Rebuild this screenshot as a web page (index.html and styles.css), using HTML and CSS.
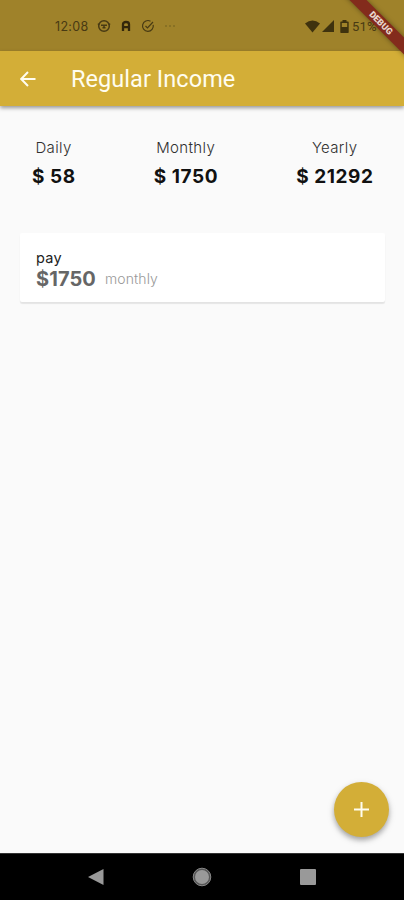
FILE: index.html
```html
<!DOCTYPE html>
<html lang="en">
<head>
<meta charset="utf-8">
<title>Regular Income</title>
<link rel="stylesheet" href="styles.css">
</head>
<body>
<div class="screen">
  <div class="status">
    <span class="clock">12:08</span>
    <svg class="face" width="14" height="14" viewBox="0 0 14 14"><circle cx="7" cy="7" r="5.300"/><path d="M.8 5.200H2.500M11.500 5.200h1.700M4 6.300h6M5.500 8.800h3M7 6.500v2"/></svg>
    <svg class="arch" width="10" height="12" viewBox="0 0 10 12"><path d="M2 11V4.300Q2 2 5 2T8 4.300V11M2 7.200H8"/></svg>
    <svg class="check" width="14" height="14" viewBox="0 0 14 14"><path d="M12.200 5.800A5.400 5.400 0 1 1 9.500 2.200M4.500 7l2 2L12 3"/></svg>
    <svg class="dots" width="12" height="4" viewBox="0 0 12 4"><path d="M1 2h2M5 2h2M9 2h2"/></svg>
    <div class="system">
      <svg width="15" height="13" viewBox="0 0 15 13"><path d="M0 3.500Q7.500-2.500 15 3.500L7.500 12.500Z"/></svg>
      <svg width="12" height="12" viewBox="0 0 12 12"><path d="M12 0V12H0Z"/></svg>
      <svg class="battery" width="9" height="13" viewBox="0 0 9 13"><path fill-rule="evenodd" d="M2.500 0h4v1.500H8q.7 0 .7.700v10q0 .8-.7.800H1q-.7 0-.7-.8v-10q0-.7.700-.7h1.500ZM1.800 3V7H7.200V3Z"/></svg>
      <span class="percent">51%</span>
    </div>
  </div>
  <header class="appbar">
    <svg class="back" width="16" height="16" viewBox="0 0 16 16"><path d="M15.500 8H1.500M8 1L1.200 8L8 15"/></svg>
    <h1>Regular Income</h1>
  </header>
  <main>
    <section class="totals">
      <div class="total daily"><span class="label">Daily</span><strong>$ 58</strong></div>
      <div class="total monthly"><span class="label">Monthly</span><strong>$ 1750</strong></div>
      <div class="total yearly"><span class="label">Yearly</span><strong>$ 21292</strong></div>
    </section>
    <article class="card">
      <div class="name">pay</div>
      <div class="line"><strong>$1750</strong><span>monthly</span></div>
    </article>
  </main>
  <nav class="navbar">
    <svg width="16" height="18" viewBox="0 0 16 18"><path d="M0 9L15.500 1V17Z"/></svg>
    <svg width="20" height="20" viewBox="0 0 20 20"><circle class="ring" cx="10" cy="10" r="8.800"/><circle cx="10" cy="10" r="7"/></svg>
    <svg width="16" height="16" viewBox="0 0 16 16"><rect width="16" height="16" rx="1"/></svg>
  </nav>
  <button class="fab" aria-label="Add"><svg width="15" height="15" viewBox="0 0 15 15"><path d="M7.500 0v15M0 7.500h15"/></svg></button>
  <div class="banner">DEBUG</div>
</div>
</body>
</html>
```
FILE: styles.css
```css
* { box-sizing: border-box; }
body { margin: 0; font-family: Inter, Roboto, sans-serif; }
svg { display: block; flex: none; }
.screen { position: relative; display: flex; flex-direction: column; width: 404px; height: 900px; overflow: hidden; background: #fafafa; }
.status { display: flex; align-items: center; height: 51px; padding: 1px 29px 0 55px; background: #9f822a; color: #483a13; font-size: 13px; }
.clock { width: 42px; font-size: 12.5px; letter-spacing: .3px; }
.status > svg { fill: none; stroke: #483a13; stroke-width: 1.2; }
.status .face { stroke-width: 1.5; }
.status .arch { margin-left: 10px; stroke: #33270b; stroke-width: 2.300; }
.status .check { margin-left: 10px; }
.status .dots { margin-left: 9px; stroke: #73601f; }
.system { display: flex; align-items: center; margin-left: auto; fill: #3f320e; }
.system svg + svg { margin-left: 2px; }
.system .battery { margin-left: 6px; }
.percent { margin-left: 3px; width: 23px; font-family: Roboto, sans-serif; letter-spacing: .2px; white-space: nowrap; }
.appbar { display: flex; align-items: center; height: 55px; padding-left: 20px; background: #d3ae37; color: #fffdf0; box-shadow: 0 2px 4px rgba(0,0,0,.4); z-index: 1; }
.back { fill: none; stroke: #fffdf0; stroke-width: 2; }
h1 { margin: 1px 0 0 35px; font: 400 23.5px/28px Roboto, sans-serif; letter-spacing: .06px; }
main { flex: 1; padding: 32px 19px 0 20px; }
.totals { display: flex; justify-content: space-between; padding: 0 12px; }
.total { display: flex; flex-direction: column; align-items: center; color: #111; }
.label { font-size: 15px; line-height: 20px; color: #303030; letter-spacing: .35px; font-weight: 300; }
.total strong { margin-top: 7px; margin-right: -.5px; font-size: 19px; line-height: 24px; font-weight: 700; letter-spacing: .55px; white-space: nowrap; }
.card { height: 69px; margin-top: 44px; padding: 16px; border-radius: 2px; background: #fff; box-shadow: 0 2px 1px rgba(0,0,0,.08), 0 1px 2px rgba(0,0,0,.02); }
.name { font-size: 14.5px; line-height: 18px; color: #222; letter-spacing: .3px; }
.line { display: flex; align-items: center; height: 24px; }
.line strong { width: 69px; font-size: 20px; color: #666; letter-spacing: .1px; }
.line span { font-size: 14px; line-height: 16px; margin-top: -1px; color: #999; font-weight: 300; letter-spacing: .1px; }
.navbar { display: flex; align-items: center; justify-content: space-between; height: 47px; padding: 0 88px; border-top: 1px solid #333; background: #000; fill: #999; }
.ring { fill: #555; stroke: #888; stroke-width: 1; }
.fab { position: absolute; left: 334px; top: 782px; display: grid; place-items: center; width: 55px; height: 55px; padding: 0; border: 0; border-radius: 50%; background: #d3ae37; box-shadow: 0 3px 5px rgba(0,0,0,.28), 0 3px 8px rgba(0,0,0,.1); }
.fab svg { stroke: #fffdf0; stroke-width: 2; }
.banner { position: absolute; left: 331px; top: 17px; width: 100px; height: 12px; transform: rotate(45deg); background: #832b1c; color: #e8d5cc; box-shadow: 0 0 5px rgba(0,0,0,.4); font: 900 9px/12px Roboto, sans-serif; text-align: center; z-index: 2; }
```
